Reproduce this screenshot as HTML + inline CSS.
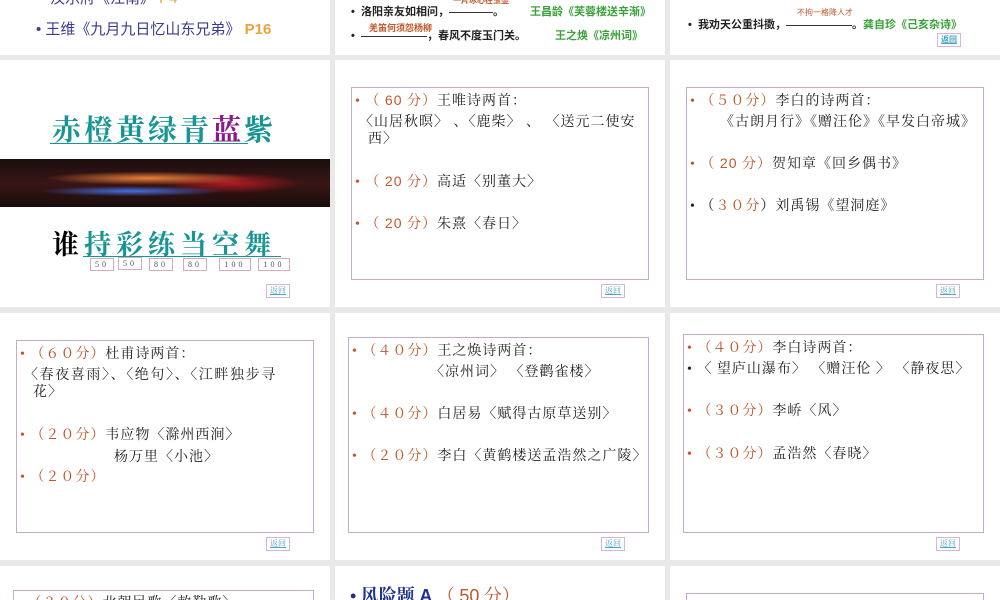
<!DOCTYPE html>
<html><head><meta charset="utf-8"><style>
*{margin:0;padding:0;box-sizing:border-box}
html,body{width:1000px;height:600px;overflow:hidden}
body{background:#e9e9e9;position:relative;font-family:"Liberation Serif","Noto Serif CJK SC",serif;color:#222}
.s{position:absolute;background:#fff;overflow:hidden}
.a{position:absolute;white-space:nowrap}
.box{position:absolute;border:1px solid #c7a9c9}
.o{color:#c0562c}
.ret{position:absolute;width:24px;height:14px;border:1px solid #d7b4cf;font-size:8px;color:#4aa3c8;text-align:center;line-height:12px;text-decoration:underline}
.sans{font-family:"Liberation Sans","Noto Sans CJK SC",sans-serif}
.nb{position:absolute;height:13px;border:1px solid #d8aab6;font-size:8px;text-align:center;line-height:11px;letter-spacing:3px;color:#555}
.t{font-size:14px;letter-spacing:1px}
</style></head><body>
<!-- row 0 -->
<div class="s" style="left:0;top:0;width:330px;height:55px">
 <div class="a sans" style="left:50px;top:-13px;font-size:15px;color:#3b3b8f">汉乐府《江南》 <span style="color:#e8a43a">P4</span></div>
 <div class="a sans" style="left:36px;top:18px;font-size:15px;color:#3b3b8f">• 王维《九月九日忆山东兄弟》 <span style="color:#e8a43a;font-weight:bold">P16</span></div>
</div>
<div class="s sans" style="left:335px;top:0;width:330px;height:55px;font-size:11px;font-weight:bold">
 <div class="a" style="left:16px;top:3px">•&nbsp; 洛阳亲友如相问，<span style="display:inline-block;width:44px;border-bottom:1px solid #333;vertical-align:middle"></span>。</div>
 <div class="a" style="left:118px;top:-5px;font-size:8px;color:#c0562c">一片冰心在玉壶</div>
 <div class="a" style="left:195px;top:3px;color:#3ba23b">王昌龄《芙蓉楼送辛渐》</div>
 <div class="a" style="left:16px;top:27px">•&nbsp; <span style="display:inline-block;width:66px;border-bottom:1px solid #333;vertical-align:middle"></span>，春风不度玉门关。</div>
 <div class="a" style="left:34px;top:21px;font-size:9px;color:#c0562c">羌笛何须怨杨柳</div>
 <div class="a" style="left:220px;top:27px;color:#3ba23b">王之焕《凉州词》</div>
</div>
<div class="s sans" style="left:670px;top:0;width:330px;height:55px;font-size:11px;font-weight:bold">
 <div class="a" style="left:18px;top:16px">•&nbsp; 我劝天公重抖擞，<span style="display:inline-block;width:66px;border-bottom:1px solid #333;vertical-align:middle"></span>。<span style="color:#3ba23b">龚自珍《己亥杂诗》</span></div>
 <div class="a" style="left:127px;top:7px;font-size:8px;font-weight:normal;color:#c0562c">不拘一格降人才</div>
 <div class="ret" style="left:267px;top:33px">返回</div>
</div>
<!-- row 1 -->
<div class="s" style="left:0;top:60px;width:330px;height:247px">
 <div class="a" style="left:52px;top:48px;font-size:29px;font-weight:bold;color:#179494;letter-spacing:3px">赤橙黄绿青<span style="color:#8a1a8a">蓝</span>紫</div>
 <div class="a" style="left:50px;top:83px;width:198px;height:1px;background:#179494"></div>
 <div class="a" style="left:0;top:99px;width:330px;height:48px;background:radial-gradient(ellipse 45% 20% at 45% 40%,rgba(255,140,60,.9),transparent 70%),radial-gradient(ellipse 40% 15% at 40% 67%,rgba(70,120,255,.9),transparent 70%),radial-gradient(ellipse 30% 30% at 70% 50%,rgba(230,30,40,.7),transparent 70%),linear-gradient(#1a0e0e,#3a1515 50%,#1a0d0d)"></div>
 <div class="a" style="left:52px;top:163px;font-size:27px;font-weight:bold;color:#179494;letter-spacing:5px"><span style="color:#000">谁</span>持彩练当空舞</div>
 <div class="a" style="left:83px;top:196px;width:198px;height:1px;background:#179494"></div>
 <div class="nb" style="left:90px;top:198px;width:24px">50</div>
 <div class="nb" style="left:118px;top:197px;width:24px">50</div>
 <div class="nb" style="left:149px;top:198px;width:24px">80</div>
 <div class="nb" style="left:183px;top:198px;width:24px">80</div>
 <div class="nb" style="left:219px;top:198px;width:32px">100</div>
 <div class="nb" style="left:258px;top:198px;width:32px">100</div>
 <div class="ret" style="left:266px;top:224px">返回</div>
</div>
<div class="s" style="left:335px;top:60px;width:330px;height:247px">
 <div class="box" style="left:16px;top:27px;width:298px;height:193px"></div>
 <div class="a t" style="left:20px;top:30px"><span class="o">• （ <span class="sans">60</span> 分）</span>王唯诗两首：</div>
 <div class="a t" style="left:24px;top:51px">〈山居秋暝〉 、〈鹿柴〉 、 〈送元二使安</div>
 <div class="a t" style="left:33px;top:68px">西〉</div>
 <div class="a t" style="left:20px;top:111px"><span class="o">• （ <span class="sans">20</span> 分）</span>高适〈别董大〉</div>
 <div class="a t" style="left:20px;top:153px"><span class="o">• （ <span class="sans">20</span> 分）</span>朱熹〈春日〉</div>
 <div class="ret" style="left:266px;top:224px">返回</div>
</div>
<div class="s" style="left:670px;top:60px;width:330px;height:247px">
 <div class="box" style="left:16px;top:27px;width:298px;height:193px"></div>
 <div class="a t" style="left:20px;top:30px"><span class="o">• （５０分）</span>李白的诗两首：</div>
 <div class="a t" style="left:50px;top:51px">《古朗月行》《赠汪伦》《早发白帝城》</div>
 <div class="a t" style="left:20px;top:93px"><span class="o">• （ <span class="sans">20</span> 分）</span>贺知章《回乡偶书》</div>
 <div class="a t" style="left:20px;top:135px">• （<span class="o">３０分</span>）刘禹锡《望洞庭》</div>
 <div class="ret" style="left:266px;top:224px">返回</div>
</div>
<!-- row 2 -->
<div class="s" style="left:0;top:313px;width:330px;height:247px">
 <div class="box" style="left:16px;top:27px;width:298px;height:193px"></div>
 <div class="a t" style="left:20px;top:30px"><span class="o">• （６０分）</span>杜甫诗两首：</div>
 <div class="a t" style="left:24px;top:51px;letter-spacing:1.6px">〈春夜喜雨〉、〈绝句〉、〈江畔独步寻</div>
 <div class="a t" style="left:33px;top:68px">花〉</div>
 <div class="a t" style="left:20px;top:111px"><span class="o">• （２０分）</span>韦应物〈滁州西涧〉</div>
 <div class="a t" style="left:114px;top:133px">杨万里〈小池〉</div>
 <div class="a t" style="left:20px;top:153px"><span class="o">• （２０分）</span></div>
 <div class="ret" style="left:266px;top:224px">返回</div>
</div>
<div class="s" style="left:335px;top:313px;width:330px;height:247px">
 <div class="box" style="left:13px;top:24px;width:301px;height:196px"></div>
 <div class="a t" style="left:17px;top:27px"><span class="o">• （４０分）</span>王之焕诗两首：</div>
 <div class="a t" style="left:95px;top:48px">〈凉州词〉 〈登鹳雀楼〉</div>
 <div class="a t" style="left:17px;top:90px"><span class="o">• （４０分）</span>白居易〈赋得古原草送别〉</div>
 <div class="a t" style="left:17px;top:132px"><span class="o">• （２０分）</span>李白〈黄鹤楼送孟浩然之广陵〉</div>
 <div class="ret" style="left:266px;top:224px">返回</div>
</div>
<div class="s" style="left:670px;top:313px;width:330px;height:247px">
 <div class="box" style="left:13px;top:21px;width:301px;height:199px"></div>
 <div class="a t" style="left:17px;top:24px"><span class="o">• （４０分）</span>李白诗两首：</div>
 <div class="a t" style="left:17px;top:45px">• 〈 望庐山瀑布〉 〈赠汪伦 〉 〈静夜思〉</div>
 <div class="a t" style="left:17px;top:87px"><span class="o">• （３０分）</span>李峤〈风〉</div>
 <div class="a t" style="left:17px;top:130px"><span class="o">• （３０分）</span>孟浩然〈春晓〉</div>
 <div class="ret" style="left:266px;top:224px">返回</div>
</div>
<!-- row 3 -->
<div class="s" style="left:0;top:566px;width:330px;height:34px">
 <div class="box" style="left:13px;top:24px;width:301px;height:20px"></div>
 <div class="a t" style="left:17px;top:26px"><span class="o">• （３０分）</span>北朝民歌〈敕勒歌〉</div>
</div>
<div class="s" style="left:335px;top:566px;width:330px;height:34px">
 <div class="a" style="left:15px;top:16px;font-size:18px;font-weight:bold;color:#1f2f8f">• 风险题 <span class="sans">A</span> <span class="o" style="font-weight:normal">（ <span class="sans">50</span> 分）</span></div>
</div>
<div class="s" style="left:670px;top:566px;width:330px;height:34px">
 <div class="box" style="left:16px;top:27px;width:298px;height:20px"></div>
</div>
</body></html>
